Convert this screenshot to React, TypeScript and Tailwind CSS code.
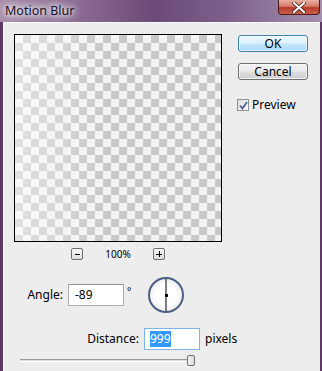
export default function App() {
  return (
    <div className="w-[322px] h-[371px] flex flex-col overflow-hidden bg-[#5d3862] font-['Noto_Sans',sans-serif] text-[12px] leading-[16px] text-black">
      {/* title bar */}
      <div className="h-[22px] shrink-0 flex items-start justify-between bg-[linear-gradient(90deg,#a88ea9_0%,#8e6e95_22%,#6c4a77_48%,#7d5f8b_70%,#a48fb0_100%)]">
        <span className="ml-[5px] mt-[3px] text-[12.5px] leading-[16px] text-[#12122a] [text-shadow:0_0_5px_#ffffff,0_0_9px_#ffffff,0_0_12px_#ffffff]">
          Motion Blur
        </span>
        <div className="mr-[2px] w-[42px] h-[15px] rounded-b-[4px] border border-t-0 border-[#4d1a18] bg-[linear-gradient(180deg,#eab0a4_0%,#d37a6a_45%,#b83a2c_55%,#c9604f_100%)] flex items-center justify-center">
          <svg width="14" height="11" viewBox="0 0 14 11">
            <path d="M2 1 L12 10 M12 1 L2 10" stroke="#3a1010" strokeWidth="3.6" strokeLinecap="round" />
            <path d="M2 1 L12 10 M12 1 L2 10" stroke="#ffffff" strokeWidth="2.2" strokeLinecap="round" />
          </svg>
        </div>
      </div>

      {/* window body */}
      <div className="flex-1 flex pl-[3px] pr-[2px]">
        <div className="flex-1 flex flex-col bg-[#ededed] border-l border-t border-[#fafafa]">
          {/* top row */}
          <div className="flex mt-[11px] ml-[10px]">
            <div className="w-[208px] flex flex-col">
              <div className="h-[208px] border border-black bg-[linear-gradient(90deg,rgba(255,255,255,0.45),rgba(255,255,255,0)_45%),conic-gradient(#c8c8c8_25%,#f3f3f3_0_50%,#c8c8c8_0_75%,#f3f3f3_0)] bg-size-[100%_100%,16px_16px]" />
              <div className="mt-[6px] h-[12px] flex items-center">
                <div className="ml-[57px] w-[12px] h-[12px] rounded-[2px] border border-[#6f6f6f] bg-[linear-gradient(180deg,#fafafa,#dcdcdc)] flex items-center justify-center">
                  <div className="w-[5px] h-[1px] bg-black" />
                </div>
                <div className="w-[70px] text-center text-[10px] leading-[12px]">100%</div>
                <div className="w-[12px] h-[12px] rounded-[2px] border border-[#6f6f6f] bg-[linear-gradient(180deg,#fafafa,#dcdcdc)] flex items-center justify-center relative">
                  <div className="w-[6px] h-[1px] bg-black" />
                  <div className="absolute w-[1px] h-[6px] bg-black" />
                </div>
              </div>
            </div>
            <div className="ml-[16px] pt-[1px] flex flex-col">
              <div className="w-[70px] h-[17px] rounded-[3px] border border-[#3c7fb1] bg-[linear-gradient(180deg,#ecf7fd_0%,#ddf1fc_48%,#c3e6fb_52%,#a9daf8_100%)] shadow-[inset_0_0_0_1px_rgba(255,255,255,0.7)] flex items-center justify-center text-[12px] leading-[14px]">
                OK
              </div>
              <div className="mt-[11px] w-[70px] h-[17px] rounded-[3px] border border-[#707070] bg-[linear-gradient(180deg,#f2f2f2_0%,#ebebeb_48%,#dddddd_52%,#cfcfcf_100%)] shadow-[inset_0_0_0_1px_rgba(255,255,255,0.7)] flex items-center justify-center text-[12px] leading-[14px]">
                Cancel
              </div>
              <div className="mt-[18px] -ml-[1px] flex items-center">
                <div className="w-[12px] h-[12px] border border-[#8e8f8f] bg-[linear-gradient(135deg,#dcdcdc,#ffffff)] flex items-center justify-center">
                  <svg width="9" height="9" viewBox="0 0 9 9">
                    <path d="M1 4.5 L3.5 7.5 L8 1" fill="none" stroke="#4a5f97" strokeWidth="1.8" />
                  </svg>
                </div>
                <span className="ml-[3px] text-[12px] leading-[14px]">Preview</span>
              </div>
            </div>
          </div>

          {/* angle row */}
          <div className="mt-[17px] h-[36px] flex items-center">
            <div className="w-[59px] text-right">Angle:</div>
            <div className="ml-[5px] w-[56px] h-[22px] border border-[#abadb3] border-t-[#8d8f96] bg-white flex items-center pl-[6px]">
              -89
            </div>
            <div className="w-[24px] self-start mt-[9px] pl-[3px] text-[10px] leading-[10px]">°</div>
            <div className="relative w-[36px] h-[36px] rounded-full border-2 border-[#4b5f85] bg-[radial-gradient(circle,#ffffff_45%,#e4e6ea_85%,#c9cdd6_100%)] flex items-center justify-center">
              <div className="absolute left-1/2 top-0 bottom-0 w-[1px] -translate-x-1/2 bg-black" />
              <div className="w-[3px] h-[3px] bg-black" />
            </div>
          </div>

          {/* distance row */}
          <div className="mt-[15px] h-[22px] flex items-center">
            <div className="w-[135px] text-right">Distance:</div>
            <div className="ml-[5px] w-[56px] h-[22px] border border-[#7eb4ea] bg-white flex items-center pl-[5px]">
              <span className="bg-[#3399ff] text-white">999</span>
            </div>
            <span className="ml-[5px]">pixels</span>
          </div>

          {/* slider */}
          <div className="mt-[5px] ml-[16px] relative w-[172px] h-[11px]">
            <div className="absolute left-0 right-0 top-[4px] h-[3px] border-t border-[#9a9a9a] bg-[#dcdcdc] border-b border-b-white" />
            <div className="absolute left-[167px] top-0 w-[8px] h-[11px] rounded-[2px] border border-[#707070] bg-[linear-gradient(90deg,#f5f5f5,#d8d8d8)]" />
          </div>
        </div>
      </div>
    </div>
  );
}
